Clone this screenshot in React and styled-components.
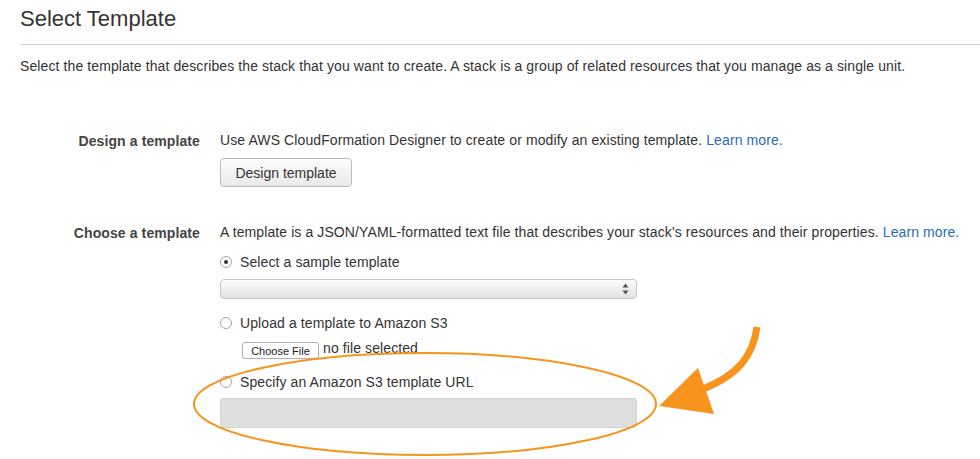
import React from "react"
import styled, { createGlobalStyle } from "styled-components"

const GlobalStyle = createGlobalStyle`
  html, body {
    margin: 0;
    padding: 0;
    background: #fff;
  }
  body {
    font-family: "Liberation Sans", Arial, sans-serif;
    color: #333;
    font-size: 14px;
    letter-spacing: 0.1px;
  }
`

const App = () => {
  return (
    <>
      <GlobalStyle />
      <Page>
        <Header>
          <Title>Select Template</Title>
        </Header>

        <Intro>
          Select the template that describes the stack that you want to create. A stack is a group of related resources that you manage as a single unit.
        </Intro>

        <Form>
          <Label>Design a template</Label>
          <Field>
            <Help>
              Use AWS CloudFormation Designer to create or modify an existing template.{" "}
              <LearnMore href="#">Learn more.</LearnMore>
            </Help>
            <Button type="button">Design template</Button>
          </Field>

          <Label $top={37}>Choose a template</Label>
          <Field $top={37}>
            <Help>
              A template is a JSON/YAML-formatted text file that describes your stack's resources and their properties.{" "}
              <LearnMore href="#">Learn more.</LearnMore>
            </Help>

            <Option $top={14}>
              <Radio $checked />
              Select a sample template
            </Option>
            <SelectBox>
              <Spinner>
                <svg width="7" height="12" viewBox="0 0 7 12">
                  <path d="M3.5 0.5 L6.5 4.5 L0.5 4.5 Z" fill="#555" />
                  <path d="M3.5 11.5 L6.5 7.5 L0.5 7.5 Z" fill="#555" />
                </svg>
              </Spinner>
            </SelectBox>

            <Option $top={16}>
              <Radio />
              Upload a template to Amazon S3
            </Option>
            <FileRow>
              <FileButton type="button">Choose File</FileButton>
              <FileName>no file selected</FileName>
            </FileRow>

            <Option $top={15}>
              <Radio />
              Specify an Amazon S3 template URL
            </Option>
            <UrlInput />
          </Field>
        </Form>
      </Page>

      <Overlay width="980" height="459" viewBox="0 0 980 459">
        <ellipse cx="425" cy="404" rx="231" ry="51" fill="none" stroke="#f7941d" strokeWidth="2" />
        <path d="M757 327 C 753 356, 738 375, 703 389" fill="none" stroke="#f7941d" strokeWidth="7" />
        <polygon points="659,406 698,368 714,414" fill="#f7941d" />
      </Overlay>
    </>
  )
}

export default App

/* ── Styled Components ── */

const Page = styled.div`
  position: relative;
  width: 980px;
  height: 459px;
  overflow: hidden;
`

const Header = styled.div`
  margin-left: 20px;
  padding-top: 6px;
  padding-bottom: 12px;
  border-bottom: 1px solid #cfcfcf;
`

const Title = styled.h2`
  margin: 0;
  font-size: 22px;
  font-weight: normal;
  letter-spacing: 0;
  color: #333;
  line-height: 26px;
`

const Intro = styled.p`
  margin: 13px 0 0 20px;
  line-height: 16px;
  color: #333;
`

const Form = styled.div`
  display: grid;
  grid-template-columns: 200px 1fr;
  column-gap: 20px;
  margin-top: 58px;
`

const Label = styled.div`
  text-align: right;
  font-weight: bold;
  color: #444;
  line-height: 16px;
  padding-top: ${p => (p.$top || 0) + 1}px;
`

const Field = styled.div`
  display: flex;
  flex-direction: column;
  align-items: flex-start;
  padding-top: ${p => p.$top || 0}px;
`

const Help = styled.div`
  line-height: 16px;
  color: #333;
`

const LearnMore = styled.a`
  color: #2a6bc0;
  text-decoration: none;
`

const Button = styled.button`
  margin-top: 10px;
  width: 132px;
  height: 29px;
  border: 1px solid #bcbcbc;
  border-radius: 4px;
  background: linear-gradient(#fdfdfd, #e9e9e9);
  font-family: "Liberation Sans", Arial, sans-serif;
  font-size: 14px;
  color: #333;
  padding: 0;
`

const Option = styled.label`
  display: flex;
  align-items: center;
  gap: 8px;
  margin-top: ${p => p.$top || 0}px;
  line-height: 16px;
  color: #333;
`

const Radio = styled.span`
  position: relative;
  width: 12px;
  height: 12px;
  box-sizing: border-box;
  border: 1px solid #a5a5a5;
  border-radius: 50%;
  background: #fff;

  &::after {
    content: "";
    display: ${p => (p.$checked ? "block" : "none")};
    position: absolute;
    left: 3px;
    top: 3px;
    width: 4px;
    height: 4px;
    border-radius: 50%;
    background: #333;
  }
`

const SelectBox = styled.div`
  margin-top: 9px;
  width: 417px;
  height: 20px;
  box-sizing: border-box;
  border: 1px solid #c6c6c6;
  border-radius: 4px;
  background: linear-gradient(#fbfbfb, #e3e3e3);
  display: flex;
  justify-content: flex-end;
  align-items: center;
  padding-right: 7px;
`

const Spinner = styled.span`
  display: flex;
`

const FileRow = styled.div`
  display: flex;
  align-items: center;
  gap: 4px;
  margin-top: 11px;
  margin-left: 22px;
  height: 17px;
`

const FileButton = styled.button`
  width: 77px;
  height: 17px;
  padding: 0;
  border: 1px solid #b0b0b0;
  border-radius: 3px;
  background: #fff;
  font-family: "Liberation Sans", Arial, sans-serif;
  font-size: 11px;
  letter-spacing: 0;
  color: #222;
`

const FileName = styled.span`
  line-height: 16px;
  margin-top: -6px;
`

const UrlInput = styled.div`
  margin-top: 8px;
  width: 417px;
  height: 30px;
  box-sizing: border-box;
  border: 1px solid #d4d4d4;
  border-radius: 3px;
  background: #dedede;
`

const Overlay = styled.svg`
  position: absolute;
  top: 0;
  left: 0;
  pointer-events: none;
`
